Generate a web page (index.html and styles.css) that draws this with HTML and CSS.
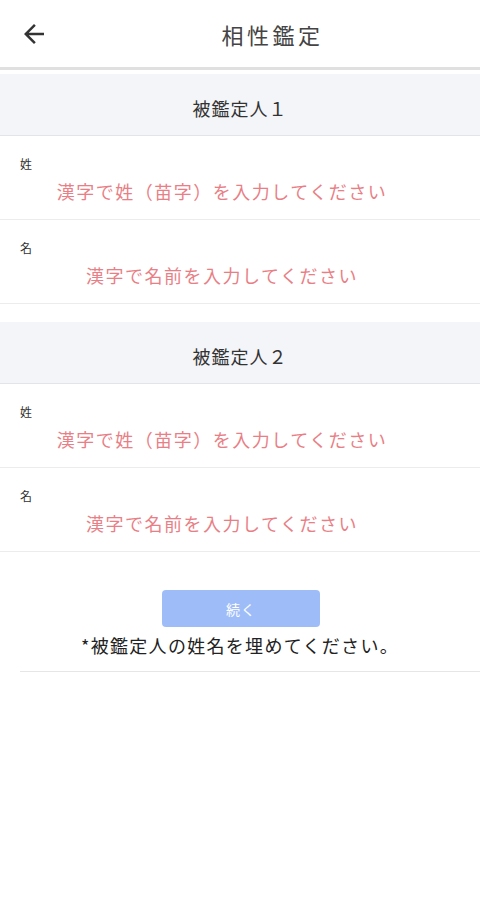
FILE: index.html
```html
<!DOCTYPE html>
<html lang="ja">
<head>
<meta charset="utf-8">
<link rel="stylesheet" href="styles.css">
</head>
<body>
<header class="topbar">
  <button class="back" aria-label="戻る">
    <svg width="30" height="30" viewBox="0 0 24 24"><path d="M20 11H7.83l5.59-5.59L12 4l-8 8 8 8 1.41-1.41L7.83 13H20v-2z" fill="#333"/></svg>
  </button>
  <h1 class="title">相性鑑定</h1>
</header>

<section class="person first">
  <div class="person-head">被鑑定人１</div>
  <div class="row">
    <div class="label">姓</div>
    <div class="input">漢字で姓（苗字）を入力してください</div>
  </div>
  <div class="row">
    <div class="label">名</div>
    <div class="input">漢字で名前を入力してください</div>
  </div>
</section>

<section class="person second">
  <div class="person-head">被鑑定人２</div>
  <div class="row">
    <div class="label">姓</div>
    <div class="input">漢字で姓（苗字）を入力してください</div>
  </div>
  <div class="row">
    <div class="label">名</div>
    <div class="input">漢字で名前を入力してください</div>
  </div>
</section>

<div class="actions">
  <button class="next">続く</button>
  <p class="note">*被鑑定人の姓名を埋めてください。</p>
  <div class="rule"></div>
</div>
</body>
</html>
```
FILE: styles.css
```css
* { box-sizing: border-box; }
html, body { margin: 0; padding: 0; background: #fff; }
body {
  width: 480px;
  font-family: "Noto Sans CJK JP", "Noto Sans", sans-serif;
  color: #333;
}
.topbar {
  height: 70px;
  display: flex;
  align-items: center;
  border-bottom: 3px solid #e0e0e0;
}
.back {
  background: none;
  border: 0;
  padding: 0;
  margin: 0 0 0 19px;
  width: 30px;
  height: 30px;
  display: flex;
}
.title {
  flex: 1;
  margin: 0;
  padding-left: 16px;
  text-align: center;
  font-size: 22px;
  font-weight: 400;
  letter-spacing: 3.5px;
  color: #444;
}
.person.first { margin-top: 4px; }
.person.second { margin-top: 18px; }
.person-head {
  height: 62px;
  padding-top: 7px;
  background: #f3f5f8;
  border-bottom: 1px solid #e4e4e6;
  display: flex;
  align-items: center;
  justify-content: center;
  font-size: 18px;
  letter-spacing: 1px;
  color: #333;
}
.row {
  height: 84px;
  border-bottom: 1px solid #ececec;
  padding: 20px 0 0 20px;
}
.label {
  font-size: 12px;
  line-height: 16px;
  color: #333;
}
.input {
  margin-top: 6px;
  padding-right: 56px;
  text-align: center;
  font-size: 18px;
  line-height: 26px;
  letter-spacing: 1.5px;
  color: #e97f86;
}
.actions {
  display: flex;
  flex-direction: column;
  align-items: center;
  padding-top: 38px;
}
.next {
  width: 158px;
  height: 37px;
  margin-left: 2px;
  border: 0;
  border-radius: 4px;
  background: #9ebdf8;
  color: #fff;
  font-family: inherit;
  font-size: 14px;
  letter-spacing: 1px;
}
.note {
  margin: 6px 0 0;
  font-size: 18px;
  line-height: 24px;
  letter-spacing: 1.3px;
  color: #222;
}
.rule {
  align-self: stretch;
  margin: 14px 0 0 20px;
  border-top: 1px solid #e6e6e6;
}
```
